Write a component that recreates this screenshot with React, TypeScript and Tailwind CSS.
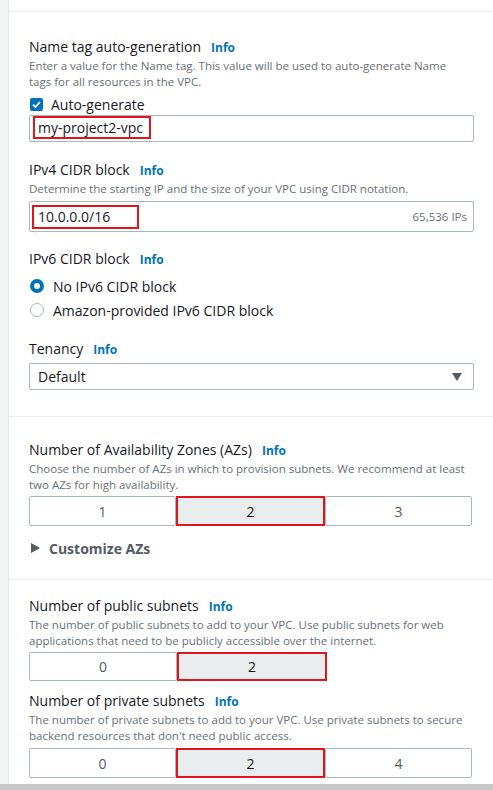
import type { ReactNode } from "react";

const font = { fontFamily: '"Open Sans", "Noto Sans", sans-serif' };

function Label({ children }: { children: ReactNode }) {
  return (
    <div className="flex items-baseline text-[14px] leading-[20px] text-[#16191f]">
      <span>{children}</span>
      <span className="ml-[10px] text-[12px] font-bold text-[#0073bb]">Info</span>
    </div>
  );
}

function Desc({ children }: { children: ReactNode }) {
  return <p className="text-[11.5px] leading-[16px] text-[#687078]">{children}</p>;
}

function Radio({ checked, label }: { checked?: boolean; label: string }) {
  return (
    <div className="flex h-[24px] items-center gap-[9px] text-[14px] text-[#16191f]">
      {checked ? (
        <span className="box-border h-[14px] w-[14px] rounded-full border-[4px] border-[#0073bb] bg-white" />
      ) : (
        <span className="box-border h-[14px] w-[14px] rounded-full border border-[#aab7b8] bg-white" />
      )}
      <span>{label}</span>
    </div>
  );
}

function Segments({ options, selected, width }: { options: string[]; selected: string; width: string }) {
  return (
    <div className={`flex ${width}`}>
      {options.map((o) =>
        o === selected ? (
          <div
            key={o}
            className="flex h-full flex-1 items-center justify-center border-2 border-[#e0161f] bg-[#eaeded] text-[14px] text-[#16191f]"
          >
            {o}
          </div>
        ) : (
          <div
            key={o}
            className="flex h-full flex-1 items-center justify-center rounded-[2px] border border-[#aab7b8] bg-white text-[14px] text-[#545b64]"
          >
            {o}
          </div>
        ),
      )}
    </div>
  );
}

export default function App() {
  return (
    <div className="flex h-[790px] w-[493px] flex-col overflow-hidden bg-white" style={font}>
      <div className="flex min-h-0 flex-1">
        <div className="w-[9px] shrink-0 border-r border-[#e4e7e7] bg-[#f2f3f3]" />
        <div className="flex min-w-0 flex-1 flex-col">
          <div className="h-[12px] border-b border-[#eaeded]" />

          {/* VPC settings */}
          <section className="border-b border-[#eaeded] pb-[26px] pl-[20px] pr-[19px] pt-[25px]">
            <Label>Name tag auto-generation</Label>
            <Desc>
              Enter a value for the Name tag. This value will be used to auto-generate Name
              <br />
              tags for all resources in the VPC.
            </Desc>
            <div className="mt-[4px] flex h-[20px] items-center gap-[8px] pl-[1px] text-[14px] text-[#16191f]">
              <span className="flex h-[13px] w-[13px] items-center justify-center rounded-[2px] bg-[#0073bb]">
                <svg width="11" height="11" viewBox="0 0 11 11">
                  <path d="M2 5.6 4.4 8 9 3" fill="none" stroke="white" strokeWidth="1.8" />
                </svg>
              </span>
              <span>Auto-generate</span>
            </div>
            <div className="mt-[1px] flex h-[27px] items-start rounded-[2px] border border-[#aab7b8] pl-[3px]">
              <span className="flex h-[23px] items-center border-2 border-[#e0161f] pl-[3px] pr-[6px] text-[14px] text-[#16191f]">
                my-project2-vpc
              </span>
            </div>

            <div className="mt-[18px]">
              <Label>IPv4 CIDR block</Label>
            </div>
            <Desc>Determine the starting IP and the size of your VPC using CIDR notation.</Desc>
            <div className="mt-[4px] flex h-[31px] items-center justify-between rounded-[2px] border border-[#aab7b8] pl-[2px] pr-[6px]">
              <span className="flex h-[24px] w-[107px] items-center border-2 border-[#e0161f] pl-[4px] text-[14px] text-[#16191f]">
                10.0.0.0/16
              </span>
              <span className="text-[11.5px] text-[#687078]">65,536 IPs</span>
            </div>

            <div className="mt-[17px]">
              <Label>IPv6 CIDR block</Label>
            </div>
            <div className="mt-[4px] pl-[1px]">
              <Radio checked label="No IPv6 CIDR block" />
              <Radio label="Amazon-provided IPv6 CIDR block" />
            </div>

            <div className="mt-[17px]">
              <Label>Tenancy</Label>
            </div>
            <div className="mt-[3px] flex h-[27px] items-center justify-between rounded-[2px] border border-[#aab7b8] pl-[8px] pr-[11px] text-[14px] text-[#16191f]">
              <span>Default</span>
              <svg width="10" height="8" viewBox="0 0 10 8">
                <path d="M0 0h10L5 8z" fill="#545b64" />
              </svg>
            </div>
          </section>

          {/* Availability Zones */}
          <section className="border-b border-[#eaeded] pb-[21px] pl-[20px] pr-[19px] pt-[23px]">
            <Label>Number of Availability Zones (AZs)</Label>
            <Desc>
              Choose the number of AZs in which to provision subnets. We recommend at least two AZs for high
              availability.
            </Desc>
            <div className="mt-[3px] h-[30px]">
              <Segments options={["1", "2", "3"]} selected="2" width="h-full w-[443px]" />
            </div>
            <div className="mt-[12px] flex h-[20px] items-center gap-[9px] pl-[2px] text-[14px] font-bold text-[#545b64]">
              <svg width="9" height="10" viewBox="0 0 9 10">
                <path d="M0 0 9 5 0 10z" fill="#545b64" />
              </svg>
              <span>Customize AZs</span>
            </div>
          </section>

          {/* Subnets */}
          <section className="pl-[20px] pr-[19px] pt-[16px]">
            <Label>Number of public subnets</Label>
            <Desc>
              The number of public subnets to add to your VPC. Use public subnets for web applications that need to be
              publicly accessible over the internet.
            </Desc>
            <div className="mt-[3px] h-[29px]">
              <Segments options={["0", "2"]} selected="2" width="h-full w-[298px]" />
            </div>

            <div className="mt-[10px]">
              <Label>Number of private subnets</Label>
            </div>
            <Desc>
              The number of private subnets to add to your VPC. Use private subnets to secure backend resources that
              don't need public access.
            </Desc>
            <div className="mt-[4px] h-[30px]">
              <Segments options={["0", "2", "4"]} selected="2" width="h-full w-[443px]" />
            </div>
          </section>
        </div>
      </div>
      <div className="h-[6px] shrink-0 bg-[#c8c8c8]" />
    </div>
  );
}
